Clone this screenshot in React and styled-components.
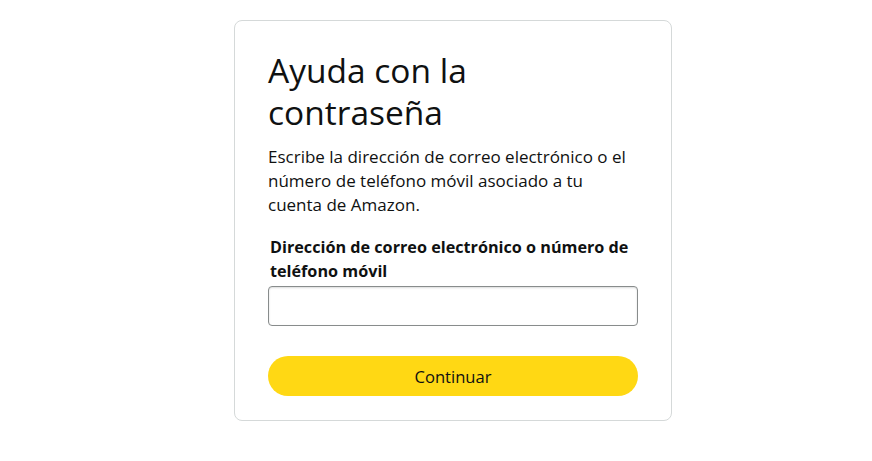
import React from "react";
import styled, { createGlobalStyle } from "styled-components";

const Global = createGlobalStyle`
  html, body { margin: 0; padding: 0; background: #ffffff; }
  body { font-family: "Open Sans", "Noto Sans", Arial, sans-serif; color: #0f1111; }
  * { box-sizing: border-box; }
`;

const Page = styled.main`
  padding: 20px 0 40px 234px;
`;

const Card = styled.section`
  width: 438px;
  border: 1px solid #d5d9d9;
  border-radius: 8px;
  padding: 28px 33px 24px 33px;
  display: flex;
  flex-direction: column;
`;

const Title = styled.h1`
  margin: 0;
  font-size: 33.5px;
  font-weight: 400;
  line-height: 42px;
  color: #0f1111;
`;

const Lead = styled.p`
  margin: 12px 0 0;
  font-size: 17px;
  line-height: 24px;
`;

const Label = styled.label`
  margin-top: 18px;
  padding-left: 2px;
  font-size: 16.2px;
  font-weight: 700;
  line-height: 24px;
`;

const Input = styled.input`
  margin-top: 3px;
  height: 40px;
  width: 100%;
  border: 1px solid #888c8c;
  border-radius: 4px;
  padding: 0 10px;
  font: inherit;
  outline: none;
  box-shadow: 0 1px 2px rgba(15, 17, 17, 0.15) inset;
`;

const Button = styled.button`
  margin-top: 30px;
  height: 40px;
  width: 100%;
  border: none;
  border-radius: 100px;
  background: #ffd814;
  color: #0f1111;
  font-family: inherit;
  font-size: 16.6px;
  cursor: pointer;
`;

export default function App() {
  return (
    <>
      <Global />
      <Page>
        <Card>
          <Title>Ayuda con la contraseña</Title>
          <Lead>
            Escribe la dirección de correo electrónico o el número de teléfono móvil asociado a tu cuenta de Amazon.
          </Lead>
          <Label htmlFor="email">Dirección de correo electrónico o número de teléfono móvil</Label>
          <Input id="email" type="text" />
          <Button type="button">Continuar</Button>
        </Card>
      </Page>
    </>
  );
}
